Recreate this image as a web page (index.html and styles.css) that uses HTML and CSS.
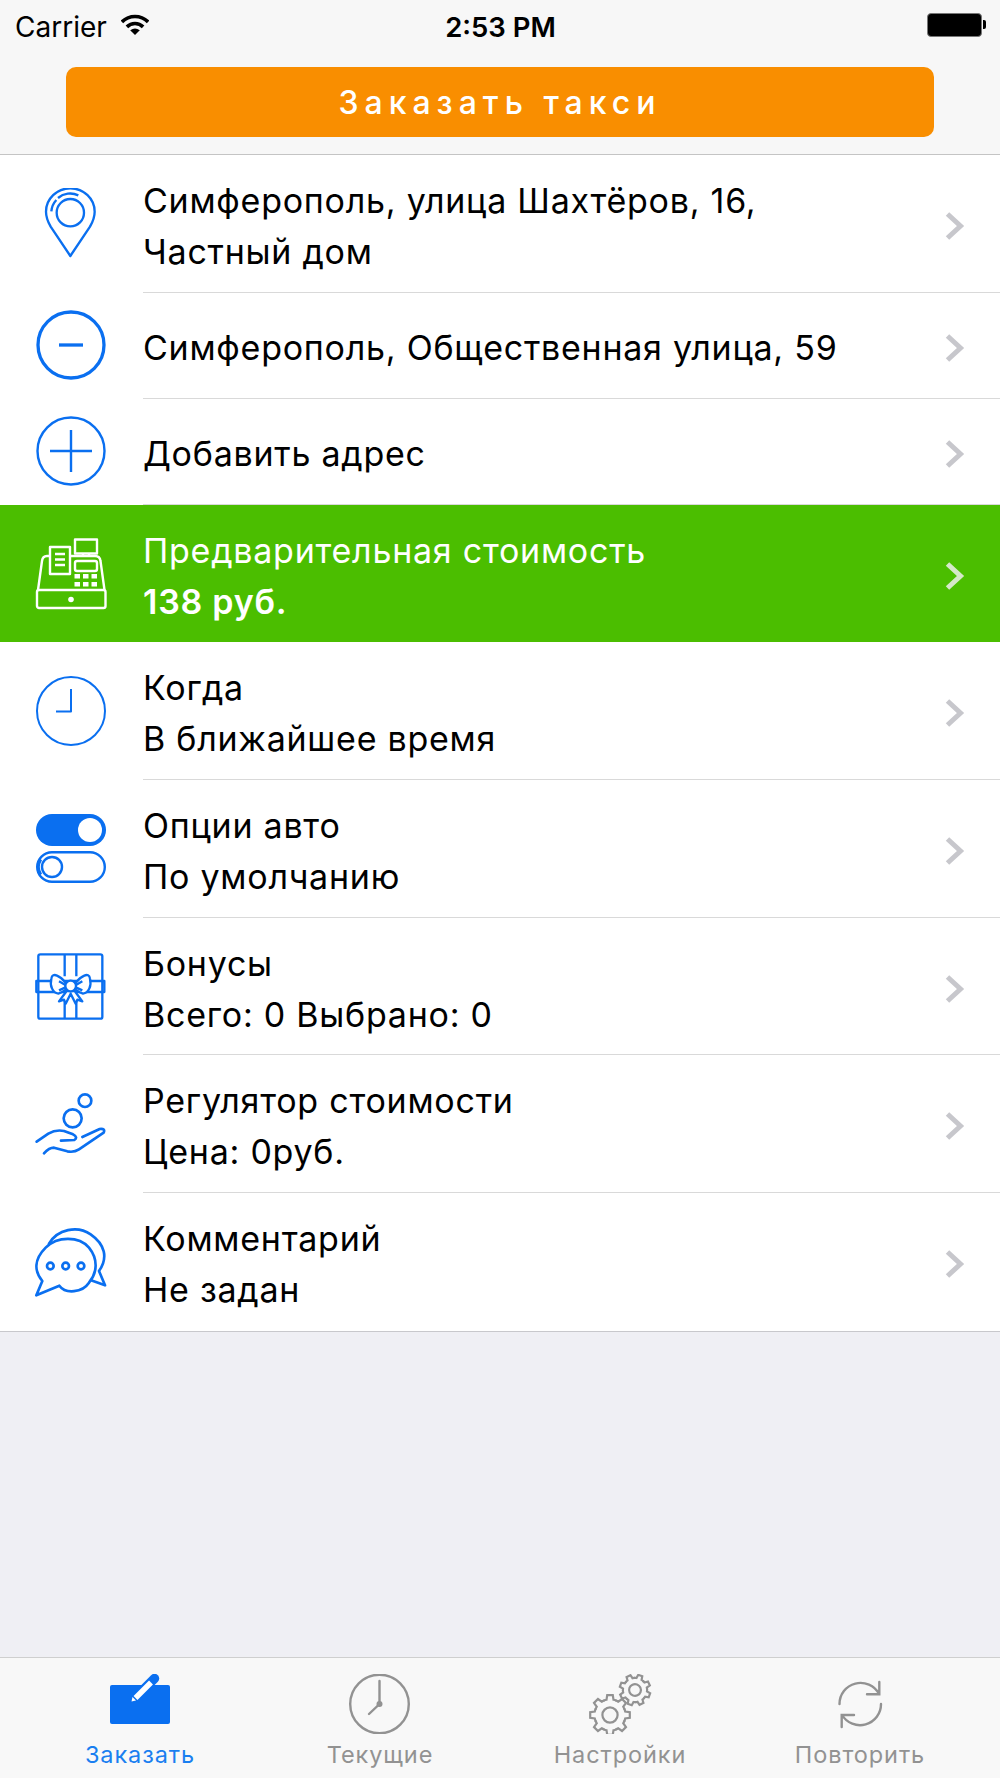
FILE: index.html
```html
<!DOCTYPE html>
<html lang="ru">
<head>
    <meta charset="UTF-8">
    <meta name="viewport" content="width=device-width, initial-scale=1.0">
    <title>Заказать такси</title>
    <link rel="stylesheet" href="styles.css">
</head>
<body>

<svg class="defs" width="0" height="0">
    <defs>
        <path id="chevron" d="M2.5 3 L15.5 15 L2.5 27"/>
        <path id="tooth" d="M-29.8-72.1 A78 78 0 0 1 -17.6-76 L-13.9-99 L13.9-99 L17.6-76 A78 78 0 0 1 29.8-72.1"/>
        <g id="gear">
            <use href="#tooth"/>
            <use href="#tooth" transform="rotate(45)"/>
            <use href="#tooth" transform="rotate(90)"/>
            <use href="#tooth" transform="rotate(135)"/>
            <use href="#tooth" transform="rotate(180)"/>
            <use href="#tooth" transform="rotate(225)"/>
            <use href="#tooth" transform="rotate(270)"/>
            <use href="#tooth" transform="rotate(315)"/>
            <circle r="38"/>
        </g>
    </defs>
</svg>

<!-- Status bar + order button -->
<header class="top">
    <div class="status">
        <div class="status-left">
            <span class="carrier">Carrier</span>
            <svg class="wifi" width="28" height="21" viewBox="0 0 28 21">
                <path class="wifi-arc" d="M.9 7.9 A18.5 18.5 0 0 1 27.1 7.9"/>
                <path class="wifi-arc" d="M5.9 12.9 A11.5 11.5 0 0 1 22.1 12.9"/>
                <path d="M14 21 L9.2 16.2 Q14 12.6 18.8 16.2 Z"/>
            </svg>
        </div>
        <span class="clock">2:53 PM</span>
        <div class="battery"></div>
    </div>
    <button class="order-btn">Заказать такси</button>
</header>

<main class="list">
    <a class="row">
        <span class="row-icon">
            <svg class="ic" width="72" height="72" viewBox="108 564 216 216">
                <path d="M214 768 L155 680 Q141 655 141 635 A73 70 0 0 1 287 635 Q287 655 273 680 Z"/>
                <circle cx="214" cy="638" r="41"/>
                <path d="M157 634 A57 57 0 0 1 172 600 M177 594 A57 57 0 0 1 238 586"/>
            </svg>
        </span>
        <span class="row-body">
            <span class="row-text">Симферополь, улица Шахтёров, 16,<br>Частный дом</span>
            <svg class="chev" width="20" height="30" viewBox="0 0 20 30"><use href="#chevron"/></svg>
        </span>
    </a>
    <a class="row short">
        <span class="row-icon">
            <svg class="ic thick" width="72" height="72" viewBox="0 0 72 72">
                <circle cx="36" cy="36" r="33"/>
                <path d="M24 36 H48"/>
            </svg>
        </span>
        <span class="row-body">
            <span class="row-text">Симферополь, Общественная улица, 59</span>
            <svg class="chev" width="20" height="30" viewBox="0 0 20 30"><use href="#chevron"/></svg>
        </span>
    </a>
    <a class="row short">
        <span class="row-icon">
            <svg class="ic thin" width="72" height="72" viewBox="0 0 72 72">
                <circle cx="36" cy="36" r="33.5"/>
                <path d="M15 36 H57 M36 15 V57"/>
            </svg>
        </span>
        <span class="row-body">
            <span class="row-text">Добавить адрес</span>
            <svg class="chev" width="20" height="30" viewBox="0 0 20 30"><use href="#chevron"/></svg>
        </span>
    </a>
    <a class="row price">
        <span class="row-icon">
            <svg class="ic thin" width="72" height="72" viewBox="0 0 72 72">
                <rect x="2" y="52" width="68.5" height="18" rx="2"/>
                <path d="M3 52 L7 23 Q7.6 18 12 18 H15 M35 18 H60 Q65 18 65.5 23 L69.5 52"/>
                <rect x="15" y="9" width="20" height="27"/>
                <path d="M20 16 H30 M20 21.5 H30 M20 27 H30"/>
                <rect x="40" y="1.5" width="22" height="14"/>
                <path d="M48 16 V18 M54 16 V18"/>
                <rect x="40" y="23" width="22" height="10" rx="2"/>
                <g class="keys">
                    <rect x="39.5" y="36" width="5.5" height="4.5"/><rect x="48" y="36" width="5.5" height="4.5"/><rect x="56.5" y="36" width="5.5" height="4.5"/>
                    <rect x="39.5" y="44" width="5.5" height="4.5"/><rect x="48" y="44" width="5.5" height="4.5"/><rect x="56.5" y="44" width="5.5" height="4.5"/>
                    <circle cx="36" cy="61.5" r="2.8"/>
                </g>
            </svg>
        </span>
        <span class="row-body">
            <span class="row-text">Предварительная стоимость<br><b>138 руб.</b></span>
            <svg class="chev" width="20" height="30" viewBox="0 0 20 30"><use href="#chevron"/></svg>
        </span>
    </a>
    <a class="row">
        <span class="row-icon">
            <svg class="ic fine" width="72" height="72" viewBox="0 0 72 72">
                <circle cx="36" cy="36" r="34"/>
                <path d="M36 14 V36.5 H21"/>
            </svg>
        </span>
        <span class="row-body">
            <span class="row-text">Когда<br>В ближайшее время</span>
            <svg class="chev" width="20" height="30" viewBox="0 0 20 30"><use href="#chevron"/></svg>
        </span>
    </a>
    <a class="row">
        <span class="row-icon">
            <svg class="ic thin" width="72" height="72" viewBox="0 0 72 72">
                <rect class="solid" x="1" y="1" width="70" height="32" rx="16"/>
                <circle class="knob" cx="55" cy="17" r="12"/>
                <rect x="2.2" y="39.2" width="67.6" height="29.6" rx="14.8"/>
                <circle cx="17" cy="54" r="10"/>
                <path d="M6 46.5 A14 14 0 0 0 6 61.5"/>
            </svg>
        </span>
        <span class="row-body">
            <span class="row-text">Опции авто<br>По умолчанию</span>
            <svg class="chev" width="20" height="30" viewBox="0 0 20 30"><use href="#chevron"/></svg>
        </span>
    </a>
    <a class="row">
        <span class="row-icon">
            <svg class="ic" width="72" height="72" viewBox="48 32 216 216">
                <rect x="58" y="42" width="192" height="193" rx="6"/>
                <rect x="52" y="122" width="204" height="33"/>
                <path d="M137 42 V108 M172 42 V108 M137 168 V235 M172 168 V235"/>
                <path class="paper" d="M143 152 L120 183 L135 178 L140 190 L155 160 L170 190 L175 178 L190 183 L167 152 Z"/>
                <path class="paper" d="M140 127 C125 108 100 93 97 115 C92 135 100 158 118 160 C125 158 135 152 140 148 Z"/>
                <path class="paper" d="M170 127 C185 108 210 93 213 115 C218 135 210 158 192 160 C185 158 175 152 170 148 Z"/>
                <circle class="paper" cx="155" cy="137" r="16"/>
                <path d="M120 123 L138 133 M120 150 L138 142 M190 123 L172 133 M190 150 L172 142"/>
            </svg>
        </span>
        <span class="row-body">
            <span class="row-text">Бонусы<br>Всего: 0 Выбрано: 0</span>
            <svg class="chev" width="20" height="30" viewBox="0 0 20 30"><use href="#chevron"/></svg>
        </span>
    </a>
    <a class="row">
        <span class="row-icon">
            <svg class="ic round" width="72" height="72" viewBox="108 114 216 216">
                <circle cx="258" cy="152" r="19"/>
                <circle cx="221" cy="205" r="27"/>
                <path d="M113 275 L148 251 Q170 238 195 243 L222 253 Q238 262 226 270 L186 272"/>
                <path d="M250 261 L302 237 Q320 235 314 248 L240 298 Q225 308 205 304 L165 293 Q150 293 135 310"/>
            </svg>
        </span>
        <span class="row-body">
            <span class="row-text">Регулятор стоимости<br>Цена: 0руб.</span>
            <svg class="chev" width="20" height="30" viewBox="0 0 20 30"><use href="#chevron"/></svg>
        </span>
    </a>
    <a class="row">
        <span class="row-icon">
            <svg class="ic round" width="72" height="72" viewBox="108 525 216 216">
                <path d="M150 578 C175 535 235 522 275 550 C318 580 328 620 300 660 L318 703 L276 688"/>
                <path d="M181 704 C200 730 250 725 270 695 C295 665 298 625 270 590 C240 555 175 555 140 590 C105 625 105 660 130 690 L112 733 Z"/>
                <circle cx="154" cy="645" r="10"/>
                <circle cx="200" cy="645" r="10"/>
                <circle cx="246" cy="645" r="10"/>
            </svg>
        </span>
        <span class="row-body">
            <span class="row-text">Комментарий<br>Не задан</span>
            <svg class="chev" width="20" height="30" viewBox="0 0 20 30"><use href="#chevron"/></svg>
        </span>
    </a>
</main>

<!-- Нижняя панель -->
<nav class="tabs">
    <a class="tab active">
        <svg width="72" height="60" viewBox="104 1673 72 60">
            <rect class="tab-fill" x="110" y="1684" width="60" height="39" rx="2"/>
            <path class="pen-tip" d="M140 1692 L154.5 1677.5"/>
            <path class="pen-body" d="M135.5 1697 L151 1681.5"/>
            <path class="pen-point" d="M131.5 1700.5 L132.5 1696 L136 1699.5 Z"/>
        </svg>
        <span>Заказать</span>
    </a>
    <a class="tab">
        <svg class="tab-line" width="72" height="60" viewBox="344 1673 72 60">
            <circle cx="379.5" cy="1703" r="29.3"/>
            <path d="M379.5 1680 V1703 L369 1713"/>
            <circle class="tab-dot" cx="379.5" cy="1703" r="3"/>
        </svg>
        <span>Текущие</span>
    </a>
    <a class="tab">
        <svg class="tab-line" width="72" height="60" viewBox="584 1673 72 60">
            <use href="#gear" transform="translate(610 1714) scale(.2)" stroke-width="11"/>
            <use href="#gear" transform="translate(635 1689) scale(.155) rotate(20)" stroke-width="14"/>
        </svg>
        <span>Настройки</span>
    </a>
    <a class="tab">
        <svg class="tab-line" width="72" height="60" viewBox="824 1673 72 60">
            <path d="M839.5 1703 A21 21 0 0 1 879 1693 M879.3 1681 V1693.3 H867"/>
            <path d="M881 1703 A21 21 0 0 1 842 1714 M841.7 1726 V1714 H854"/>
        </svg>
        <span>Повторить</span>
    </a>
</nav>

</body>
</html>
```

FILE: styles.css
```css
* {
    margin: 0;
    padding: 0;
    box-sizing: border-box;
}

body {
    width: 1000px;
    height: 1778px;
    display: flex;
    flex-direction: column;
    font-family: Inter, "Noto Sans", sans-serif;
    background-color: #efeff4;
    color: #000;
    overflow: hidden;
}

.defs {
    position: absolute;
}

/* Верхняя часть */
.top {
    height: 155px;
    background-color: #f7f7f7;
    border-bottom: 1px solid #c4c4c4;
}

.status {
    height: 53px;
    padding: 0 14px 0 15px;
    display: grid;
    grid-template-columns: 1fr auto 1fr;
    align-items: center;
}

.status-left {
    display: flex;
    align-items: center;
    gap: 14px;
}

.carrier {
    font-size: 28px;
}

.wifi {
    margin-top: -5px;
}

.wifi-arc {
    fill: none;
    stroke: #000;
    stroke-width: 3.6;
}

.clock {
    font-size: 27.5px;
    font-weight: 600;
}

.battery {
    justify-self: end;
    position: relative;
    width: 55px;
    height: 24px;
    margin-right: 4px;
    margin-top: -3px;
    background-color: #000;
    border: 1px solid #777;
    border-radius: 4px;
}

.battery::after {
    content: "";
    position: absolute;
    right: -5px;
    top: 6px;
    width: 3px;
    height: 9px;
    background-color: #000;
    border-radius: 0 2px 2px 0;
}

.order-btn {
    display: block;
    width: 868px;
    height: 70px;
    margin: 14px 0 0 66px;
    border: none;
    border-radius: 10px;
    background-color: #f98e00;
    color: #fff;
    font-family: inherit;
    font-size: 32px;
    font-weight: 500;
    letter-spacing: 6px;
}

/* Lista */
.list {
    display: block;
    background-color: #fff;
    border-bottom: 1px solid #c8c8cc;
}

.row {
    display: flex;
    height: 137.7px;
}

.row.short {
    height: 106px;
}

.row-icon {
    width: 143px;
    flex-shrink: 0;
    padding-left: 35px;
    display: flex;
    align-items: center;
}

.row.short .row-icon {
    padding-bottom: 2px;
}

.row-body {
    flex: 1;
    display: flex;
    align-items: center;
    justify-content: space-between;
    padding: 5px 35px 0 0;
    border-bottom: 1px solid #d9d9d9;
}

.row:last-child .row-body {
    border-bottom: none;
}

.row-text {
    font-size: 34px;
    line-height: 51px;
    letter-spacing: .75px;
}

.chev {
    fill: none;
    stroke: #c7c7cc;
    stroke-width: 5;
}

.price {
    background-color: #4bbe00;
    color: #fff;
}

.price .row-body {
    border-bottom: none;
}

.price b {
    font-weight: 600;
}

.price .chev {
    stroke: #d5e8c8;
}

/* Ikony */
.ic {
    fill: none;
    stroke: #0a6ff0;
    stroke-width: 7;
    stroke-linejoin: round;
}

.ic.thin {
    stroke-width: 2.4;
}

.ic.fine {
    stroke-width: 2;
}

.ic.thick {
    stroke-width: 3.3;
}

.ic.round {
    stroke-width: 8;
    stroke-linecap: round;
}

.price .ic {
    stroke: #fff;
}

.keys {
    fill: #fff;
    stroke: none;
}

.ic .solid {
    fill: #0a6ff0;
    stroke: none;
}

.ic .knob {
    fill: #fff;
    stroke: none;
}

.ic .paper {
    fill: #fff;
}

/* Zakladki */
.tabs {
    margin-top: auto;
    height: 121px;
    padding: 0 20px;
    display: grid;
    grid-template-columns: repeat(4, 240px);
    background-color: #f8f8f8;
    border-top: 1px solid #cfcfcf;
}

.tab {
    display: flex;
    flex-direction: column;
    align-items: center;
    justify-content: flex-end;
    padding-bottom: 9px;
    gap: 6px;
    font-size: 23.5px;
    letter-spacing: .9px;
    color: #929292;
}

.tab.active {
    color: #1a7ff0;
}

.tab-line {
    fill: none;
    stroke: #929292;
    stroke-width: 2.4;
    stroke-linecap: round;
}

.tab-line .tab-dot {
    fill: #929292;
    stroke: none;
}

.tab-fill {
    fill: #0a6ff0;
}

.pen-tip {
    stroke: #0a6ff0;
    stroke-width: 9.5;
    stroke-linecap: round;
}

.pen-body {
    stroke: #fff;
    stroke-width: 5.5;
}

.pen-point {
    fill: #fff;
}
```
